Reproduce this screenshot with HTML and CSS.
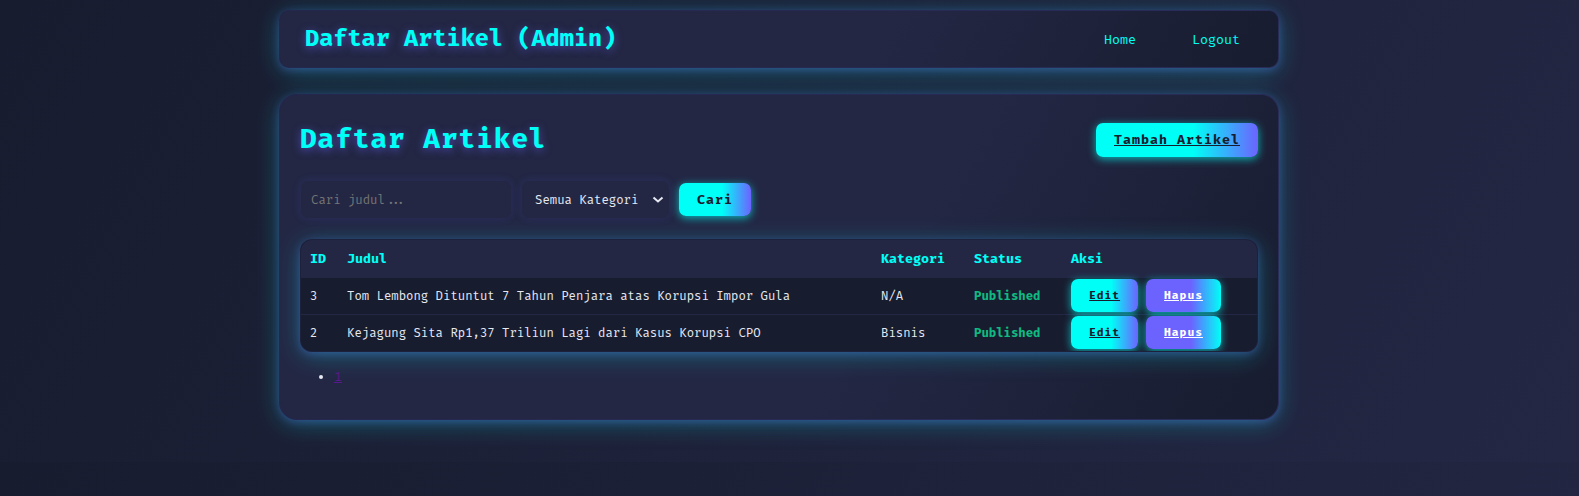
FILE: index.html
```html
<!DOCTYPE html>
<html lang="id">
<head>
<meta charset="utf-8">
<title>Daftar Artikel (Admin)</title>
<link rel="stylesheet" href="styles.css">
</head>
<body>
<header class="topbar">
  <div class="brand">Daftar Artikel (Admin)</div>
  <nav class="nav">
    <a href="#home">Home</a>
    <a href="#logout">Logout</a>
  </nav>
</header>
<main class="panel">
  <div class="panel-head">
    <h1 class="title">Daftar Artikel</h1>
    <a class="btn btn-primary" href="#tambah">Tambah Artikel</a>
  </div>
  <form class="filters">
    <input class="field search" type="text" placeholder="Cari judul..." aria-label="Cari judul">
    <div class="select-wrap">
      <select class="field category" aria-label="Kategori">
        <option>Semua Kategori</option>
      </select>
      <svg class="chevron" viewBox="0 0 12 8" width="12" height="8" aria-hidden="true"><path d="M1.500 1.500 6 5.500l4.500-4" fill="none" stroke="#e6e9f2" stroke-width="2"/></svg>
    </div>
    <button class="btn btn-primary btn-submit" type="button">Cari</button>
  </form>
  <table class="articles">
    <thead>
      <tr><th class="col-id">ID</th><th class="col-title">Judul</th><th class="col-cat">Kategori</th><th class="col-status">Status</th><th class="col-actions">Aksi</th></tr>
    </thead>
    <tbody>
      <tr>
        <td>3</td><td>Tom Lembong Dituntut 7 Tahun Penjara atas Korupsi Impor Gula</td><td>N/A</td><td class="published">Published</td>
        <td><div class="actions"><a class="btn btn-primary btn-small" href="#edit-3">Edit</a><a class="btn btn-danger btn-small" href="#hapus-3">Hapus</a></div></td>
      </tr>
      <tr>
        <td>2</td><td>Kejagung Sita Rp1,37 Triliun Lagi dari Kasus Korupsi CPO</td><td>Bisnis</td><td class="published">Published</td>
        <td><div class="actions"><a class="btn btn-primary btn-small" href="#edit-2">Edit</a><a class="btn btn-danger btn-small" href="#hapus-2">Hapus</a></div></td>
      </tr>
    </tbody>
  </table>
  <ul class="pages">
    <li><a href="#page-1">1</a></li>
  </ul>
</main>
</body>
</html>
```
FILE: styles.css
```css
* {
  box-sizing: border-box;
}

body {
  margin: 0;
  padding: 10px 21px 42px 0;
  background: linear-gradient(120deg, #181c2f 0%, #232744 100%);
  color: #e6e9f2;
  font-family: "Fira Code", "Fira Mono", "DejaVu Sans Mono", monospace;
  font-size: 13px;
  line-height: 20px;
}

.topbar,
.panel {
  max-width: 1000px;
  margin: 0 auto;
  border: 1px solid #6c63ff22;
  background: linear-gradient(120deg, #232744 60%, #181c2f 100%);
  background-clip: padding-box;
  box-shadow: 0 4px 24px #00fff744, 0 2px 8px #6c63ff55;
}

.topbar {
  display: flex;
  align-items: center;
  justify-content: space-between;
  height: 58px;
  padding: 0 25px;
  border-radius: 10px;
}

.brand {
  color: #00fff7;
  font-size: 23px;
  line-height: 28px;
  font-weight: 700;
  text-shadow: 0 2px 8px #6c63ff99;
}

.nav {
  display: flex;
  gap: 30px;
  padding-top: 2px;
}

.nav a {
  padding: 4px 13px;
  color: #00fff7;
  text-decoration: none;
}

.panel {
  margin-top: 26px;
  padding: 20px;
  border-radius: 18px;
}

.panel-head {
  display: flex;
  align-items: center;
  justify-content: space-between;
  height: 50px;
}

.title {
  margin: 0;
  color: #00fff7;
  font-size: 27px;
  line-height: 36px;
  letter-spacing: 1px;
  text-shadow: 0 2px 8px #6c63ff99;
}

.btn {
  display: inline-block;
  padding: 7px 18px;
  border: 0;
  border-radius: 7px;
  font: 700 13px/20px "Fira Code", "Fira Mono", "DejaVu Sans Mono", monospace;
  letter-spacing: 1px;
  box-shadow: 0 2px 8px #00fff7aa;
}

.btn-primary {
  background: linear-gradient(90deg, #00fff7 60%, #6c63ff 100%);
  color: #181c2f;
}

.btn-danger {
  background: linear-gradient(90deg, #6c63ff 60%, #00fff7 100%);
  color: #ffffff;
}

.btn-submit,
.btn-small {
  padding: 7px 18px 6px;
}

.btn-small {
  font-size: 11px;
}

.filters {
  display: flex;
  align-items: center;
  gap: 9px;
  margin: 15px 0 20px;
}

.field {
  height: 39px;
  border: 1px solid #262a4e;
  border-radius: 8px;
  background: #232744;
  color: #e6e9f2;
  font: 12px/20px "Fira Code", "Fira Mono", "DejaVu Sans Mono", monospace;
  box-shadow: 0 0 8px #6c63ff22;
}

.search {
  width: 212px;
  padding: 1px 10px 0;
}

.search::placeholder {
  color: #757575;
}

.select-wrap {
  position: relative;
}

.category {
  width: 149px;
  padding: 2px 13px 0;
  appearance: none;
}

.chevron {
  position: absolute;
  right: 6px;
  top: 16px;
  pointer-events: none;
}

.articles {
  width: 100%;
  border: 1px solid #6c63ff11;
  border-radius: 12px;
  border-spacing: 0;
  overflow: hidden;
  background: #181c2f;
  font-size: 12px;
  box-shadow: 0 4px 24px #00fff744, 0 2px 8px #6c63ff55;
}

.articles th,
.articles td {
  padding: 0 9px;
  text-align: left;
}

.articles th {
  height: 38px;
  background: #232744;
  color: #00fff7;
  font-size: 13px;
}

.articles td {
  height: 37px;
  padding-top: 1px;
  border-bottom: 1px solid #232744;
}

.articles tr:last-child td {
  height: 36px;
  border-bottom: 0;
}

.col-id {
  width: 37px;
}

.col-cat {
  width: 93px;
}

.col-status {
  width: 97px;
}

.col-actions {
  width: 195px;
}

.articles .published {
  color: #10b981;
  font-weight: 700;
}

.actions {
  display: flex;
  gap: 8px;
  margin-bottom: 2px;
}

.pages {
  margin: 15px 0 12px;
  padding-left: 34px;
}

.pages a {
  color: #551a8b;
}
```
